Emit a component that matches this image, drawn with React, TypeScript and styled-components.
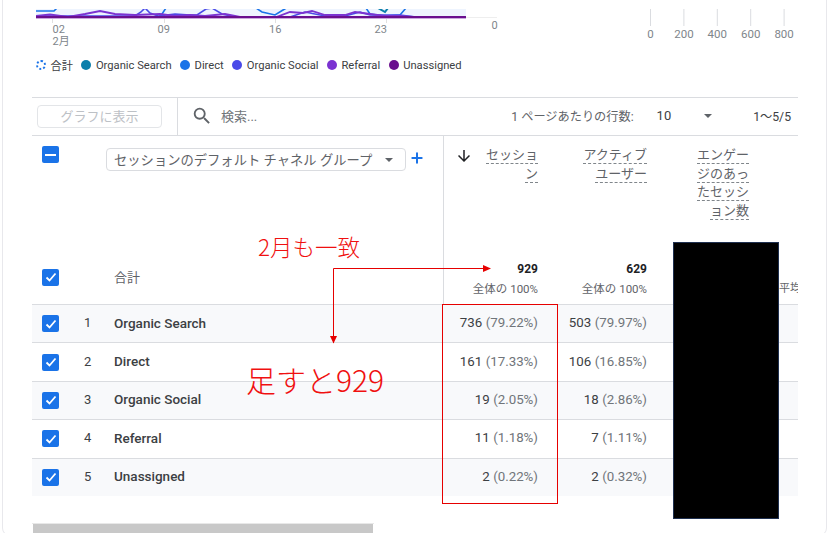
import { createGlobalStyle } from 'styled-components';
import styled from 'styled-components';
import { MdArrowDownward, MdSearch } from 'react-icons/md';
import { Plus } from 'lucide-react';

const legend = [
  { name: 'Organic Search', color: '#0b7fab' },
  { name: 'Direct', color: '#1a73e8' },
  { name: 'Organic Social', color: '#4a4ae8' },
  { name: 'Referral', color: '#7b33d1' },
  { name: 'Unassigned', color: '#6a0f8e' },
];

const rows = [
  { name: 'Organic Search', sessions: '736', sessionsPct: '(79.22%)', users: '503', usersPct: '(79.97%)' },
  { name: 'Direct', sessions: '161', sessionsPct: '(17.33%)', users: '106', usersPct: '(16.85%)' },
  { name: 'Organic Social', sessions: '19', sessionsPct: '(2.05%)', users: '18', usersPct: '(2.86%)' },
  { name: 'Referral', sessions: '11', sessionsPct: '(1.18%)', users: '7', usersPct: '(1.11%)' },
  { name: 'Unassigned', sessions: '2', sessionsPct: '(0.22%)', users: '2', usersPct: '(0.32%)' },
];

function Check() {
  return (
    <CheckBox>
      <svg width="12" height="12" viewBox="0 0 12 12" fill="none">
        <path d="M1.5 6.5 4.5 9.5 10.5 2.5" stroke="#fff" strokeWidth="1.8" />
      </svg>
    </CheckBox>
  );
}

function TrendChart() {
  return (
    <svg width="480" height="50" viewBox="32 0 480 50">
      <defs>
        <clipPath id="plot">
          <rect x="36" y="9" width="430" height="10" />
        </clipPath>
      </defs>
      <rect x="36" y="9" width="430" height="9" fill="#eef4fe" />
      <line x1="466" y1="17.5" x2="497" y2="17.5" stroke="#eeeeee" />
      <g clipPath="url(#plot)" fill="none" strokeWidth="1.6">
        <polyline stroke="#1a73e8" points="36,11 54,11 58,7" />
        <polyline stroke="#1a73e8" points="160,17 166,8" />
        <polyline stroke="#1a73e8" points="256,8 262,12 275,15 283,10 290,6" />
        <polyline stroke="#0b7fab" strokeWidth="2" points="378,8 385,12 388,8" />
        <polyline stroke="#1a73e8" points="366,8 370,14 385,16 400,15 406,8" />
        <polyline
          stroke="#4a4ae8"
          points="36,16 100,16 135,16 141,12 145,8 150,13 158,16 175,14 190,15 197,15 206,9 212,8 222,14 235,17 290,17 305,12 325,16 345,16 360,12 370,15 400,15 420,17.5"
        />
        <polyline
          stroke="#7b33d1"
          strokeWidth="1.8"
          points="36,16 50,14.5 68,17 85,14 100,11 115,14 135,15 160,14 175,16 190,15 205,16 225,14 240,17 275,17.5 290,12 303,13 312,11 325,15 345,15 355,12 370,14 385,16 400,16 420,17.5"
        />
      </g>
      <line x1="36" y1="17" x2="466" y2="17" stroke="#6a0f8e" strokeWidth="2" />
      <line x1="36" y1="18.5" x2="466" y2="18.5" stroke="#c9a8dc" />
      <g stroke="#e0e0e0">
        <line x1="52.5" y1="19" x2="52.5" y2="23" />
        <line x1="164.5" y1="19" x2="164.5" y2="23" />
        <line x1="275.5" y1="19" x2="275.5" y2="23" />
        <line x1="386.5" y1="19" x2="386.5" y2="23" />
      </g>
      <g fill="#80868b" fontSize="11" fontFamily="Roboto, 'Noto Sans CJK JP', sans-serif">
        <text x="52.5" y="32.5">02</text>
        <text x="52.5" y="45">2月</text>
        <text x="157.5" y="32.5">09</text>
        <text x="269" y="32.5">16</text>
        <text x="374.5" y="32.5">23</text>
        <text x="491.5" y="28.5">0</text>
      </g>
    </svg>
  );
}

function BarAxis() {
  const ticks = [0, 200, 400, 600, 800];
  return (
    <svg width="170" height="50" viewBox="640 0 170 50">
      {ticks.map((t, i) => {
        const x = 650.5 + i * 33.4;
        return (
          <g key={t}>
            <line x1={x} y1="9" x2={x} y2="26" stroke="#dadce0" />
            <text
              x={x}
              y="38"
              textAnchor="middle"
              fill="#80868b"
              fontSize="11.5"
              fontFamily="Roboto, sans-serif"
            >
              {t}
            </text>
          </g>
        );
      })}
    </svg>
  );
}

function Annotations() {
  return (
    <AnnotationLayer>
      <svg width="825" height="533" viewBox="2 0 825 533">
        <rect x="442.5" y="304.5" width="115" height="199" fill="none" stroke="#e60000" strokeWidth="1" />
        <path d="M333.5 343V268.5H490" fill="none" stroke="#e60000" strokeWidth="1" />
        <path d="M491 268.5l-8-3.5v7z" fill="#e60000" />
        <path d="M333.5 343.5l-3.5-7.5h7z" fill="#e60000" />
      </svg>
      <NoteSmall>2月も一致</NoteSmall>
      <NoteLarge>足すと929</NoteLarge>
      <Mask />
    </AnnotationLayer>
  );
}

export default function App() {
  return (
    <>
      <GlobalStyle />
      <Card>
        <Charts>
          <TrendChart />
          <BarAxis />
        </Charts>
        <Legend>
          <LegendItem>
            <TotalDot />
            合計
          </LegendItem>
          {legend.map((l) => (
            <LegendItem key={l.name}>
              <Dot $color={l.color} />
              {l.name}
            </LegendItem>
          ))}
        </Legend>
        <Table>
          <Toolbar>
            <ToolbarLeft>
              <PlotButton>グラフに表示</PlotButton>
            </ToolbarLeft>
            <SearchBox>
              <MdSearch size={22} color="#5f6368" />
              <span>検索...</span>
            </SearchBox>
            <Pagination>
              <span>1 ページあたりの行数:</span>
              <PageSize>10</PageSize>
              <PageCaret />
              <PageRange>1〜5/5</PageRange>
            </Pagination>
          </Toolbar>
          <HeadRow>
            <HeadCheck>
              <MinusBox />
            </HeadCheck>
            <span />
            <HeadDim>
              <DimSelect>
                セッションのデフォルト チャネル グループ
                <Caret />
              </DimSelect>
              <Plus size={16} color="#1a73e8" strokeWidth={3} />
            </HeadDim>
            <HeadMetric>
              <SortIcon>
                <MdArrowDownward size={18} color="#202124" />
              </SortIcon>
              <HeadLabel>
                <span>セッション</span>
              </HeadLabel>
            </HeadMetric>
            <HeadMetric>
              <HeadLabel $width={66}>
                <span>アクティブ ユーザー</span>
              </HeadLabel>
            </HeadMetric>
            <HeadMetric>
              <HeadLabel>
                <span>エンゲージのあったセッション数</span>
              </HeadLabel>
            </HeadMetric>
          </HeadRow>
          <TotalRow>
            <CheckCell>
              <Check />
            </CheckCell>
            <span />
            <TotalLabel>合計</TotalLabel>
            <TotalCell>
              <strong>929</strong>
              <small>全体の 100%</small>
            </TotalCell>
            <TotalCell>
              <strong>629</strong>
              <small>全体の 100%</small>
            </TotalCell>
            <TotalCell />
            <ClippedCell>平均</ClippedCell>
          </TotalRow>
          {rows.map((r, i) => (
            <DataRow key={r.name} $striped={i % 2 === 0}>
              <CheckCell>
                <Check />
              </CheckCell>
              <Index>{i + 1}</Index>
              <Name>{r.name}</Name>
              <Value>
                {r.sessions} <Pct>{r.sessionsPct}</Pct>
              </Value>
              <Value>
                {r.users} <Pct>{r.usersPct}</Pct>
              </Value>
            </DataRow>
          ))}
        </Table>
        <ScrollTrack>
          <ScrollThumb />
        </ScrollTrack>
        <Annotations />
      </Card>
    </>
  );
}

const GlobalStyle = createGlobalStyle`
  html, body {
    margin: 0;
    background: #fff;
    overflow: hidden;
  }
  body {
    font-family: Roboto, 'Noto Sans CJK JP', sans-serif;
    color: #202124;
  }
`;

const Card = styled.div`
  position: relative;
  box-sizing: border-box;
  width: 825px;
  height: 536px;
  margin-left: 2px;
  padding-left: 29px;
  background: #fff;
  border: 1px solid #e8e8ec;
  border-top: 0;
  border-radius: 0 0 8px 8px;
  overflow: hidden;
`;

const Charts = styled.div`
  display: flex;
  justify-content: space-between;
  height: 50px;
  padding-right: 16px;

  svg {
    display: block;
  }
`;

const Legend = styled.div`
  display: flex;
  align-items: center;
  gap: 8.5px;
  height: 30px;
  padding-left: 4px;
  font-size: 11.2px;
  color: #3c4043;
`;

const LegendItem = styled.span`
  display: flex;
  align-items: center;
  gap: 4.5px;
`;

const Dot = styled.i<{ $color: string }>`
  width: 10px;
  height: 10px;
  border-radius: 50%;
  background: ${(p) => p.$color};
`;

const TotalDot = styled.i`
  box-sizing: border-box;
  width: 10px;
  height: 10px;
  border-radius: 50%;
  border: 2px dotted #1a73e8;
`;

const Table = styled.div`
  width: 766px;
  margin-top: 17px;
  overflow: hidden;
`;

const Toolbar = styled.div`
  display: flex;
  align-items: stretch;
  box-sizing: border-box;
  height: 39px;
  border-top: 1px solid #dadce0;
  border-bottom: 1px solid #dadce0;
`;

const ToolbarLeft = styled.div`
  display: flex;
  align-items: center;
  box-sizing: border-box;
  width: 146px;
  padding-left: 5px;
  border-right: 1px solid #dadce0;
`;

const PlotButton = styled.div`
  box-sizing: border-box;
  width: 125px;
  height: 23px;
  line-height: 21px;
  text-align: center;
  font-size: 13px;
  color: #bdc1c6;
  border: 1px solid #e3e5e8;
  border-radius: 4px;
`;

const SearchBox = styled.div`
  display: flex;
  align-items: center;
  gap: 8px;
  padding: 0 0 2px 13px;
  font-size: 13px;
  color: #70757a;
`;

const Pagination = styled.div`
  display: flex;
  align-items: center;
  margin-left: auto;
  padding: 0 7px 2px 0;
  font-size: 12.2px;
  color: #5f6368;
`;

const PageSize = styled.span`
  margin-left: 23px;
  font-size: 13px;
  color: #3c4043;
`;

const Caret = styled.i`
  width: 0;
  height: 0;
  margin-left: 12px;
  border-left: 4.5px solid transparent;
  border-right: 4.5px solid transparent;
  border-top: 4.5px solid #5f6368;
`;

const PageCaret = styled(Caret)`
  margin-left: 33px;
`;

const PageRange = styled.span`
  margin-left: 41px;
  color: #3c4043;
`;

const rowGrid = `
  display: grid;
  grid-template-columns: 43px 30px 339px 104px 109px 102px 39px;
`;

const HeadRow = styled.div`
  ${rowGrid}
  height: 114px;
`;

const HeadCheck = styled.div`
  padding: 10px 0 0 10px;
`;

const MinusBox = styled.i`
  display: flex;
  align-items: center;
  justify-content: center;
  width: 17px;
  height: 17px;
  border-radius: 2px;
  background: #1a73e8;

  &::after {
    content: '';
    width: 11px;
    height: 2px;
    background: #fff;
  }
`;

const HeadDim = styled.div`
  display: flex;
  align-items: flex-start;
  gap: 3px;
  padding-top: 12px;
  border-right: 1px solid #dadce0;
  margin-left: 1px;

  svg {
    margin-top: 2px;
  }
`;

const DimSelect = styled.div`
  display: flex;
  align-items: center;
  justify-content: space-between;
  box-sizing: border-box;
  width: 300px;
  height: 23px;
  padding: 0 12px 0 7px;
  font-size: 13.3px;
  white-space: nowrap;
  color: #5f6368;
  border: 1px solid #dadce0;
  border-radius: 4px;
`;

const HeadMetric = styled.div`
  position: relative;
  display: flex;
  justify-content: flex-end;
  padding: 10px 10px 0 0;
`;

const SortIcon = styled.span`
  position: absolute;
  left: 11px;
  top: 11px;
`;

const HeadLabel = styled.div<{ $width?: number }>`
  width: ${(p) => p.$width ?? 54}px;
  font-size: 13px;
  line-height: 18.7px;
  text-align: right;
  color: #5f6368;

  span {
    border-bottom: 1px dashed #80868b;
    padding-bottom: 1px;
  }
`;

const TotalRow = styled.div`
  ${rowGrid}
  height: 54px;
`;

const CheckCell = styled.div`
  display: flex;
  align-items: center;
  padding-left: 10px;
`;

const CheckBox = styled.i`
  display: flex;
  align-items: center;
  justify-content: center;
  width: 17px;
  height: 17px;
  border-radius: 2px;
  background: #1a73e8;
`;

const TotalLabel = styled.div`
  display: flex;
  align-items: center;
  padding: 0 0 2px 9px;
  font-size: 13px;
  color: #5f6368;
  border-right: 1px solid #dadce0;
`;

const TotalCell = styled.div`
  display: flex;
  flex-direction: column;
  align-items: flex-end;
  padding: 11px 10px 0 0;

  strong {
    font-size: 12px;
    line-height: 16px;
    font-weight: 700;
    color: #202124;
  }

  small {
    margin-top: 4px;
    font-size: 11.5px;
    line-height: 16px;
    color: #5f6368;
  }
`;

const ClippedCell = styled.div`
  padding: 31px 0 0 20px;
  font-size: 11px;
  line-height: 16px;
  white-space: nowrap;
  color: #5f6368;
`;

const DataRow = styled.div<{ $striped: boolean }>`
  ${rowGrid}
  box-sizing: border-box;
  height: 38.4px;
  border-top: 1px solid #dadce0;
  background: ${(p) => (p.$striped ? '#f8f9fb' : '#fff')};
`;

const Index = styled.div`
  display: flex;
  align-items: center;
  padding: 0 0 2px 9px;
  font-size: 13px;
  color: #3c4043;
`;

const Name = styled.div`
  display: flex;
  align-items: center;
  padding: 0 0 2px 9px;
  font-size: 13.5px;
  font-weight: 500;
  color: #3c4043;
`;

const Value = styled.div`
  display: flex;
  align-items: center;
  justify-content: flex-end;
  gap: 3.5px;
  padding: 0 10px 2px 0;
  font-size: 13.3px;
  color: #3c4043;
`;

const Pct = styled.span`
  color: #70757a;
`;

const ScrollTrack = styled.div`
  margin-top: 27px;
  width: 342px;
  height: 10px;
  border-top: 1px solid #e8e8e8;
`;

const ScrollThumb = styled.div`
  width: 340px;
  height: 9px;
  margin-left: 1px;
  background: #c8c8c8;
`;

const AnnotationLayer = styled.div`
  position: absolute;
  inset: 0;
  pointer-events: none;

  svg {
    position: absolute;
    left: -1px;
    top: 0;
  }
`;

const NoteSmall = styled.div`
  position: absolute;
  left: 255px;
  top: 232px;
  font-size: 22.5px;
  line-height: 28px;
  color: #f01010;
  font-family: 'Noto Sans CJK JP', sans-serif;
  font-weight: 300;
`;

const NoteLarge = styled.div`
  position: absolute;
  left: 243px;
  top: 360px;
  font-size: 30px;
  line-height: 38px;
  color: #f01010;
  font-family: 'Noto Sans CJK JP', sans-serif;
  font-weight: 300;
`;

const Mask = styled.div`
  position: absolute;
  left: 670px;
  top: 242px;
  box-sizing: border-box;
  width: 106px;
  height: 277px;
  background: #000;
  border: 1px solid #1f3050;
`;
